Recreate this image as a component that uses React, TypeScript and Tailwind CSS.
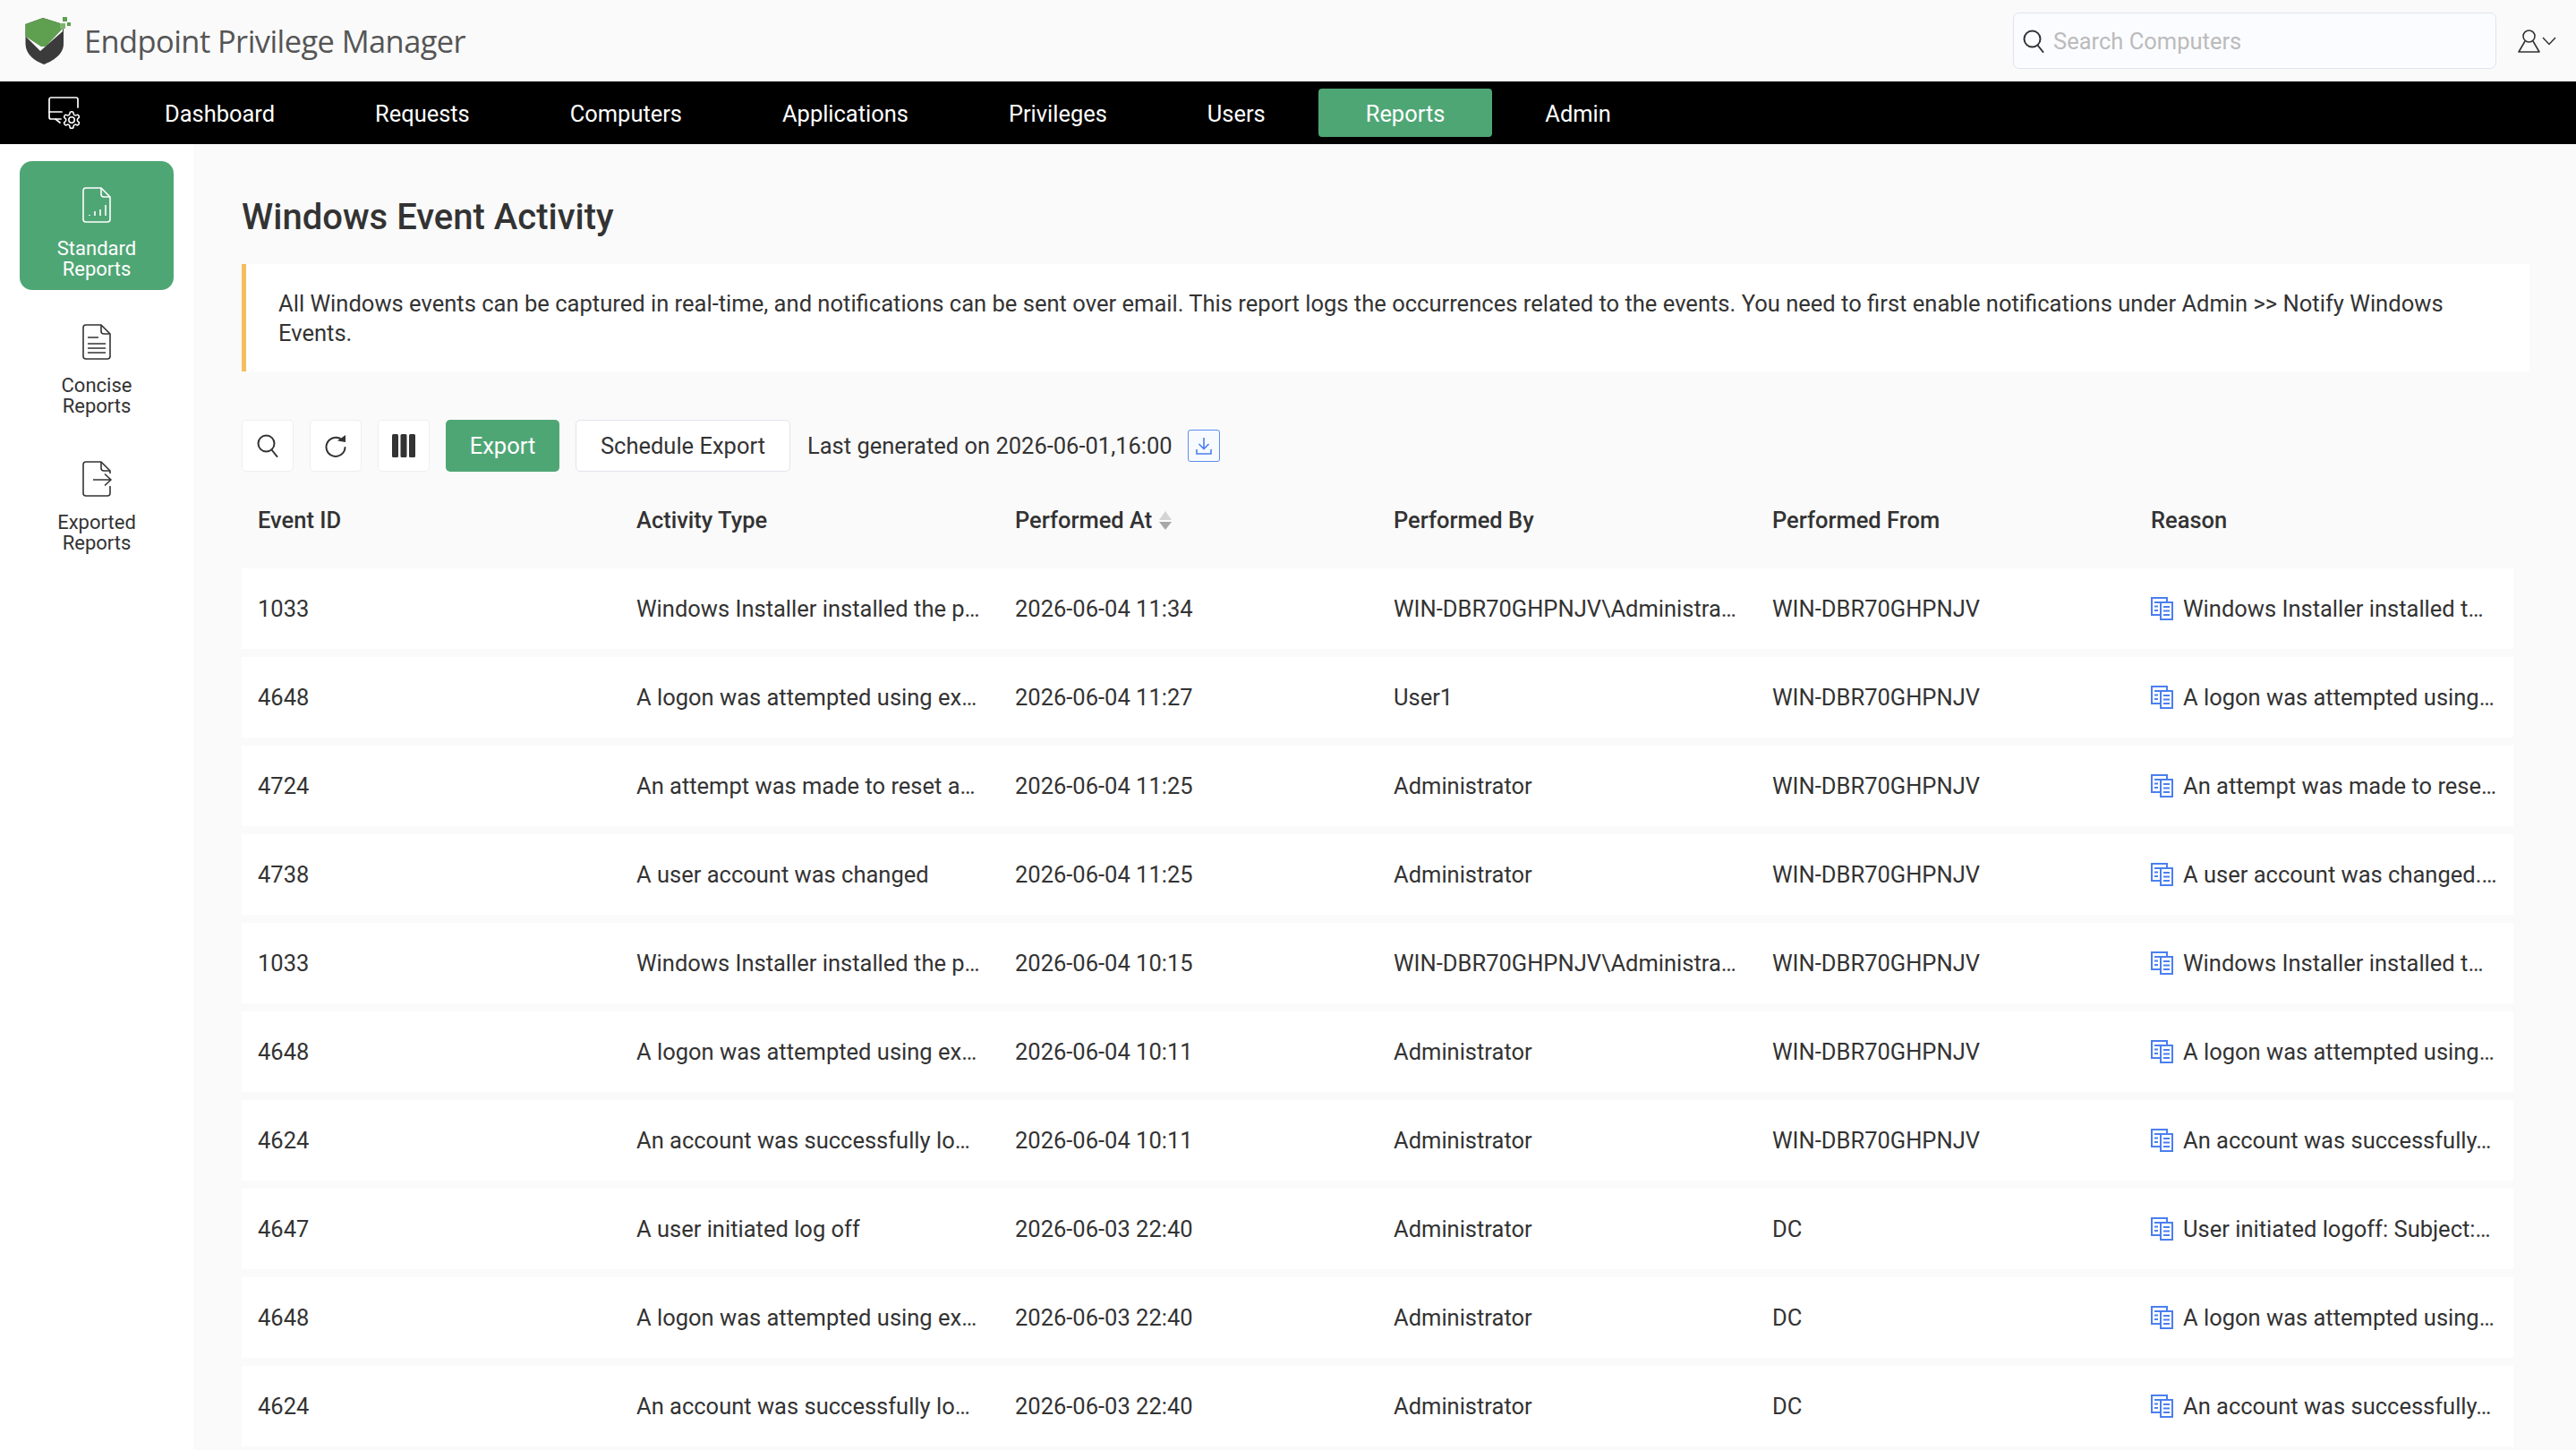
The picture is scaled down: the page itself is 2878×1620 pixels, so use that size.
const navItems = ["Dashboard", "Requests", "Computers", "Applications", "Privileges", "Users", "Reports", "Admin"];

const columns = ["Event ID", "Activity Type", "Performed At", "Performed By", "Performed From", "Reason"];

const admin = "WIN-DBR70GHPNJV\\Administrator";
const host = "WIN-DBR70GHPNJV";

const rows = [
  ["1033", "Windows Installer installed the product.", "2026-06-04 11:34", admin, host, "Windows Installer installed t…"],
  ["4648", "A logon was attempted using explicit credentials.", "2026-06-04 11:27", "User1", host, "A logon was attempted using…"],
  ["4724", "An attempt was made to reset an account password.", "2026-06-04 11:25", "Administrator", host, "An attempt was made to rese…"],
  ["4738", "A user account was changed", "2026-06-04 11:25", "Administrator", host, "A user account was changed.…"],
  ["1033", "Windows Installer installed the product.", "2026-06-04 10:15", admin, host, "Windows Installer installed t…"],
  ["4648", "A logon was attempted using explicit credentials.", "2026-06-04 10:11", "Administrator", host, "A logon was attempted using…"],
  ["4624", "An account was successfully logged on.", "2026-06-04 10:11", "Administrator", host, "An account was successfully…"],
  ["4647", "A user initiated log off", "2026-06-03 22:40", "Administrator", "DC", "User initiated logoff: Subject:…"],
  ["4648", "A logon was attempted using explicit credentials.", "2026-06-03 22:40", "Administrator", "DC", "A logon was attempted using…"],
  ["4624", "An account was successfully logged on.", "2026-06-03 22:40", "Administrator", "DC", "An account was successfully…"],
];

function Logo() {
  return (
    <svg width="52" height="54" viewBox="0 0 52 54" className="shrink-0">
      <path d="M20 1 L39 7 L43 12 V30 C43 42 31 49 21 53 C11 49 0.5 42 0.5 30 V8 Z" fill="#3b3b3b" />
      <path d="M20 1 L39 7 L43 12 V13 L23 33 H18 L0.5 22 V8 Z" fill="#5f9f50" />
      <path d="M1 22 L18 33 H23 L42 13 V16 L17 38 Z" fill="#ffffff" />
      <rect x="42" y="0" width="5" height="5" fill="#5f9f50" />
      <rect x="47" y="6" width="4" height="4" fill="#5f9f50" />
      <rect x="39" y="7" width="6" height="6" fill="#7db56e" />
    </svg>
  );
}

function SearchIcon({ className }: { className?: string }) {
  return (
    <svg width="24" height="26" viewBox="0 0 24 26" fill="none" stroke="currentColor" strokeWidth="2" className={className}>
      <circle cx="10.5" cy="10.5" r="9" />
      <path d="M16.5 17.5 L22.5 25" strokeLinecap="round" />
    </svg>
  );
}

function DocFrame({ children, stroke }: { children?: React.ReactNode; stroke: string }) {
  return (
    <svg width="32" height="40" viewBox="0 0 32 40" fill="none" stroke={stroke} strokeWidth="1.6" strokeLinejoin="round">
      <path d="M4 1 H21 L31 11 V36 A3 3 0 0 1 28 39 H4 A3 3 0 0 1 1 36 V4 A3 3 0 0 1 4 1 Z" />
      <path d="M21 1 V8 A3 3 0 0 0 24 11 H31" />
      {children}
    </svg>
  );
}

function SideItem({ label, active, icon }: { label: string; active?: boolean; icon: React.ReactNode }) {
  return (
    <div
      className={`mx-[22px] mb-[9px] flex h-[144px] flex-col items-center rounded-[14px] pt-[29px] ${
        active ? "bg-[#4fa675] text-white" : "text-[#333333]"
      }`}
    >
      {icon}
      <div className="mt-[17px] text-center text-[22px] leading-[23px]">
        {label.split(" ").map((w) => (
          <div key={w}>{w}</div>
        ))}
      </div>
    </div>
  );
}

function ToolButton({ children }: { children: React.ReactNode }) {
  return (
    <div className="flex h-[58px] w-[58px] items-center justify-center rounded-[5px] border border-[#efeff3] bg-white text-[#333333]">
      {children}
    </div>
  );
}

function CopyDocIcon() {
  return (
    <svg width="25" height="26" viewBox="0 0 25 26" fill="none" stroke="#4a7ff0" strokeWidth="2" className="shrink-0">
      <path d="M18 5 V1 H1 V20 H11" />
      <path d="M11 6 H24 V25 H11 Z" fill="#ffffff" />
      <path d="M4 6 H14 M4 10.5 H8 M4 15 H8" />
      <path d="M14 11 H21 M14 15.5 H21 M14 20 H21" />
    </svg>
  );
}

export default function App() {
  return (
    <div className="flex h-[1620px] w-[2878px] flex-col overflow-hidden bg-[#fafafa] font-['Roboto',sans-serif] text-[25.5px] text-[#333333]">
      <header className="flex h-[91px] shrink-0 items-center pl-[28px] pr-[22px]">
        <Logo />
        <div className="ml-[14px] font-['Open_Sans',sans-serif] text-[34.4px] tracking-[-0.55px] text-[#555555]">Endpoint Privilege Manager</div>
        <div className="ml-auto flex h-[63px] w-[540px] items-center rounded-[7px] border border-[#e0e4ee] bg-[#fbfcff] pl-[10px] text-[#333333]">
          <SearchIcon />
          <span className="ml-[10px] pt-px text-[#bbbbbb]">Search Computers</span>
        </div>
        <div className="ml-[24px] flex items-center">
          <svg width="25" height="26" viewBox="0 0 25 26" fill="none" stroke="#333333" strokeWidth="1.6">
            <circle cx="12.5" cy="7.5" r="6.5" />
            <path d="M8 13 L1 25 H24 L17 13" strokeLinejoin="round" />
          </svg>
          <svg width="16" height="10" viewBox="0 0 16 10" fill="none" stroke="#333333" strokeWidth="1.5" className="ml-[2px]">
            <path d="M1 1 L8 8.5 L15 1" />
          </svg>
        </div>
      </header>

      <nav className="flex h-[70px] shrink-0 items-center bg-black text-[25.45px] text-white">
        <div className="w-[128px] pl-[54px]">
          <svg width="37" height="37" viewBox="0 0 37 37" fill="none" stroke="#ffffff" strokeWidth="1.7" strokeLinecap="round">
            <path d="M14 25 H3 A2 2 0 0 1 1 23 V3 A2 2 0 0 1 3 1 H31 A2 2 0 0 1 33 3 V12" />
            <path d="M1 17 H15" />
            <path d="M8 25 L13 29" />
            <g transform="translate(15,15) scale(0.92)">
              <path d="M12.22 2h-.44a2 2 0 0 0-2 2v.18a2 2 0 0 1-1 1.73l-.43.25a2 2 0 0 1-2 0l-.15-.08a2 2 0 0 0-2.73.73l-.22.38a2 2 0 0 0 .73 2.73l.15.1a2 2 0 0 1 1 1.72v.51a2 2 0 0 1-1 1.74l-.15.09a2 2 0 0 0-.73 2.73l.22.38a2 2 0 0 0 2.73.73l.15-.08a2 2 0 0 1 2 0l.43.25a2 2 0 0 1 1 1.73V20a2 2 0 0 0 2 2h.44a2 2 0 0 0 2-2v-.18a2 2 0 0 1 1-1.73l.43-.25a2 2 0 0 1 2 0l.15.08a2 2 0 0 0 2.73-.73l.22-.39a2 2 0 0 0-.73-2.73l-.15-.08a2 2 0 0 1-1-1.74v-.5a2 2 0 0 1 1-1.74l.15-.09a2 2 0 0 0 .73-2.73l-.22-.38a2 2 0 0 0-2.73-.73l-.15.08a2 2 0 0 1-2 0l-.43-.25a2 2 0 0 1-1-1.73V4a2 2 0 0 0-2-2z" />
              <circle cx="12" cy="12" r="3.5" />
            </g>
          </svg>
        </div>
        {navItems.map((item) =>
          item === "Reports" ? (
            <div key={item} className="mx-[3px] flex h-[54px] items-center rounded-[4px] bg-[#4fa675] px-[53px] pt-[2px]">
              {item}
            </div>
          ) : (
            <div key={item} className="px-[56px] pt-[2px]">
              {item}
            </div>
          ),
        )}
      </nav>

      <div className="flex min-h-0 flex-1">
        <aside className="w-[216px] shrink-0 bg-white pt-[19px]">
          <SideItem
            label="Standard Reports"
            active
            icon={
              <DocFrame stroke="#ffffff">
                <path d="M8 32 V31 M14 32 V27 M20 32 V25 M26 32 V20" />
              </DocFrame>
            }
          />
          <SideItem
            label="Concise Reports"
            icon={
              <DocFrame stroke="#333333">
                <path d="M6 15 H18 M6 22 H26 M6 27 H26 M6 32 H26" />
              </DocFrame>
            }
          />
          <SideItem
            label="Exported Reports"
            icon={
              <svg width="33" height="40" viewBox="0 0 33 40" fill="none" stroke="#333333" strokeWidth="1.6" strokeLinejoin="round">
                <path d="M31 14 V11 L21 1 H4 A3 3 0 0 0 1 4 V36 A3 3 0 0 0 4 39 H28 A3 3 0 0 0 31 36 V28" />
                <path d="M21 1 V8 A3 3 0 0 0 24 11 H31" />
                <path d="M12 21 H32 M25 14.5 L32 21 L25 27.5" />
              </svg>
            }
          />
        </aside>

        <main className="min-w-0 flex-1 pl-[54px] pr-[52px]">
          <h1 className="flex h-[134px] items-center pt-[30px] text-[40px] font-medium leading-none">
            Windows Event Activity
          </h1>

          <div className="border-l-[5px] border-[#f5bd5f] bg-white pt-[28px] pb-[26px] pl-[36px] pr-[40px] text-[25.55px] leading-[33px]">
            All Windows events can be captured in real-time, and notifications can be sent over email. This report logs the occurrences related to the events. You need to first enable notifications under Admin &gt;&gt; Notify Windows Events.
          </div>

          <div className="mt-[54px] flex items-center">
            <div className="flex gap-[18px]">
              <ToolButton>
                <SearchIcon />
              </ToolButton>
              <ToolButton>
                <svg width="24" height="26" viewBox="0 0 24 26" fill="none" stroke="currentColor" strokeWidth="2">
                  <path d="M19.5 7 A10.5 10.5 0 1 0 22.5 15" strokeLinecap="round" />
                  <path d="M14 7.5 L23 9 V1 Z" fill="currentColor" stroke="none" />
                </svg>
              </ToolButton>
              <ToolButton>
                <svg width="26" height="26" viewBox="0 0 26 26" fill="currentColor">
                  <rect x="0" y="0" width="7" height="26" rx="1.5" />
                  <rect x="9.5" y="0" width="7" height="26" rx="1.5" />
                  <rect x="19" y="0" width="7" height="26" rx="1.5" />
                </svg>
              </ToolButton>
            </div>
            <div className="ml-[18px] flex h-[58px] w-[127px] items-center justify-center rounded-[5px] bg-[#4fa675] text-white">Export</div>
            <div className="ml-[18px] flex h-[58px] w-[240px] items-center justify-center rounded-[5px] border border-[#e3e3ec] bg-white">Schedule Export</div>
            <div className="ml-[19px] w-[407px] whitespace-nowrap">Last generated on 2026-06-01,16:00</div>
            <div className="ml-[18px] flex h-[36px] w-[36px] items-center justify-center rounded-[3px] border border-[#5b8def] bg-[#f7faff]">
              <svg width="18" height="20" viewBox="0 0 18 20" fill="none" stroke="#4a7ff0" strokeWidth="1.6">
                <path d="M9 1 V13 M3.5 8 L9 13.5 L14.5 8 M1 14 V19 H17 V14" />
              </svg>
            </div>
          </div>

          <div className="mr-[18px] grid h-[108px] grid-cols-6 items-center font-medium">
            {columns.map((c) => (
              <div key={c} className="flex items-center px-[18px]">
                {c}
                {c === "Performed At" && (
                  <svg width="14" height="21" viewBox="0 0 14 21" className="ml-[8px] shrink-0">
                    <path d="M7 0 L14 10 H0 Z" fill="#d4d4d4" />
                    <path d="M7 21 L14 12 H0 Z" fill="#a8a8a8" />
                  </svg>
                )}
              </div>
            ))}
          </div>

          <div className="mr-[18px] flex flex-col gap-[9px]">
            {rows.map((row, i) => (
              <div key={i} className="grid h-[90px] shrink-0 grid-cols-6 items-center bg-white">
                {row.map((cell, j) =>
                  j === 5 ? (
                    <div key={j} className="flex items-center whitespace-nowrap pl-[18px]">
                      <span className="mr-[11px]">
                        <CopyDocIcon />
                      </span>
                      {cell}
                    </div>
                  ) : (
                    <div key={j} className="flex min-w-0 items-center px-[18px]">
                      <span className="truncate">{cell}</span>
                    </div>
                  ),
                )}
              </div>
            ))}
          </div>
        </main>
      </div>
    </div>
  );
}
